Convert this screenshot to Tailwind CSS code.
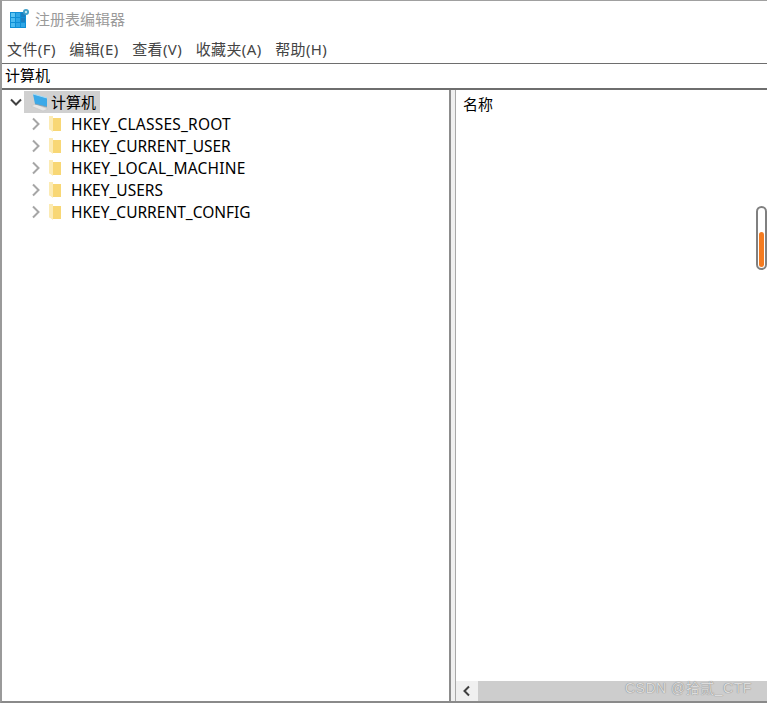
<!DOCTYPE html>
<html lang="zh-CN">
<head>
    <meta charset="UTF-8">
    <title>注册表编辑器</title>
    <script src="https://cdn.jsdelivr.net/npm/@tailwindcss/browser@4"></script>
</head>
<body class="bg-white overflow-hidden">
    <div class="relative w-[767px] h-[703px] flex flex-col border-t border-t-[#a0a0a0] border-l-2 border-l-[#9a9a9a] border-b-2 border-b-[#8a8a8a] text-[15px] text-black font-['Noto_Sans','Noto_Sans_CJK_SC',sans-serif]">
        <!-- title -->
        <div class="h-[37px] flex items-center pl-[8px] pb-[1px] gap-[5px] shrink-0">
            <svg width="20" height="20" viewBox="0 0 20 20">
                <rect x="0" y="3" width="16" height="16" fill="#0f8fd6"/>
                <rect x="1" y="4" width="4" height="4" fill="#5cc4f2"/>
                <rect x="6" y="4" width="4" height="4" fill="#2fa6e6"/>
                <rect x="11" y="4" width="4" height="4" fill="#1c7fc0"/>
                <rect x="1" y="9" width="4" height="4" fill="#4dbcf0"/>
                <rect x="6" y="9" width="4" height="4" fill="#2fa6e6"/>
                <rect x="11" y="9" width="4" height="4" fill="#1c7fc0"/>
                <rect x="1" y="14" width="4" height="4" fill="#4dbcf0"/>
                <rect x="6" y="14" width="4" height="4" fill="#2fa6e6"/>
                <rect x="11" y="14" width="4" height="4" fill="#2fa6e6"/>
                <circle cx="16" cy="3" r="3" fill="#3f9fc8"/>
                <circle cx="16" cy="3" r="1.2" fill="#bfe6f5"/>
            </svg>
            <span class="text-[15px] text-[#9a9a9a]">注册表编辑器</span>
        </div>
        <!-- menu -->
        <div class="h-[25px] flex items-center pl-[5px] pb-[2px] gap-[13.5px] text-[15px] tracking-[0.4px] text-[#444] shrink-0">
            <span>文件(F)</span>
            <span>编辑(E)</span>
            <span>查看(V)</span>
            <span>收藏夹(A)</span>
            <span>帮助(H)</span>
        </div>
        <!-- address bar -->
        <div class="h-[27px] flex items-center pl-[3px] pb-[2px] border-t border-t-[#6e6e6e] border-b-2 border-b-[#6e6e6e] shrink-0">计算机</div>
        <!-- panes -->
        <div class="flex-1 flex min-h-0">
            <!-- tree -->
            <div class="w-[447px] pt-[1px] shrink-0">
                <div class="h-[22px] flex items-center">
                    <svg class="ml-[8px]" width="12" height="12" viewBox="0 0 12 12"><path d="M1 3.5 L6 8.5 L11 3.5" fill="none" stroke="#404040" stroke-width="2"/></svg>
                    <div class="ml-[2px] h-[22px] w-[76px] bg-[#d0d0d0] flex items-center pl-[6px] gap-[1px]">
                        <svg width="20" height="20" viewBox="0 0 20 20">
                            <path d="M1 14 L13 19 L18 17 L6 12 Z" fill="#e6e6e6" stroke="#c4c4c4" stroke-width="0.6"/>
                            <path d="M3 2 L17 6 L17 15 L5 12 Z" fill="#3ca9e8"/>
                            <path d="M3 2 L17 6" stroke="#a6dcf6" stroke-width="1"/>
                            <path d="M5 12 L17 15" stroke="#8a9aa6" stroke-width="0.8"/>
                        </svg>
                        <span>计算机</span>
                    </div>
                </div>
                <div class="h-[22px] flex items-center">
                    <svg class="ml-[29px]" width="10" height="14" viewBox="0 0 10 14"><path d="M2 1.5 L7.5 7 L2 12.5" fill="none" stroke="#a6a6a6" stroke-width="2"/></svg>
                    <svg class="ml-[7px]" width="14" height="18" viewBox="0 0 14 18"><path d="M1 1 L5 1 L5 3 L13 3 L13 16 L5 16 L1 14 Z" fill="#f8d775"/><path d="M1 1 L5 1 L5 17 L1 14 Z" fill="#fcebb4"/></svg>
                    <span class="ml-[9px] mt-[2px] text-[15.5px] tracking-[0.22px]">HKEY_CLASSES_ROOT</span>
                </div>
                <div class="h-[22px] flex items-center">
                    <svg class="ml-[29px]" width="10" height="14" viewBox="0 0 10 14"><path d="M2 1.5 L7.5 7 L2 12.5" fill="none" stroke="#a6a6a6" stroke-width="2"/></svg>
                    <svg class="ml-[7px]" width="14" height="18" viewBox="0 0 14 18"><path d="M1 1 L5 1 L5 3 L13 3 L13 16 L5 16 L1 14 Z" fill="#f8d775"/><path d="M1 1 L5 1 L5 17 L1 14 Z" fill="#fcebb4"/></svg>
                    <span class="ml-[9px] mt-[2px] text-[15.5px]">HKEY_CURRENT_USER</span>
                </div>
                <div class="h-[22px] flex items-center">
                    <svg class="ml-[29px]" width="10" height="14" viewBox="0 0 10 14"><path d="M2 1.5 L7.5 7 L2 12.5" fill="none" stroke="#a6a6a6" stroke-width="2"/></svg>
                    <svg class="ml-[7px]" width="14" height="18" viewBox="0 0 14 18"><path d="M1 1 L5 1 L5 3 L13 3 L13 16 L5 16 L1 14 Z" fill="#f8d775"/><path d="M1 1 L5 1 L5 17 L1 14 Z" fill="#fcebb4"/></svg>
                    <span class="ml-[9px] mt-[2px] text-[15.5px] tracking-[0.22px]">HKEY_LOCAL_MACHINE</span>
                </div>
                <div class="h-[22px] flex items-center">
                    <svg class="ml-[29px]" width="10" height="14" viewBox="0 0 10 14"><path d="M2 1.5 L7.5 7 L2 12.5" fill="none" stroke="#a6a6a6" stroke-width="2"/></svg>
                    <svg class="ml-[7px]" width="14" height="18" viewBox="0 0 14 18"><path d="M1 1 L5 1 L5 3 L13 3 L13 16 L5 16 L1 14 Z" fill="#f8d775"/><path d="M1 1 L5 1 L5 17 L1 14 Z" fill="#fcebb4"/></svg>
                    <span class="ml-[9px] mt-[2px] text-[15.5px]">HKEY_USERS</span>
                </div>
                <div class="h-[22px] flex items-center">
                    <svg class="ml-[29px]" width="10" height="14" viewBox="0 0 10 14"><path d="M2 1.5 L7.5 7 L2 12.5" fill="none" stroke="#a6a6a6" stroke-width="2"/></svg>
                    <svg class="ml-[7px]" width="14" height="18" viewBox="0 0 14 18"><path d="M1 1 L5 1 L5 3 L13 3 L13 16 L5 16 L1 14 Z" fill="#f8d775"/><path d="M1 1 L5 1 L5 17 L1 14 Z" fill="#fcebb4"/></svg>
                    <span class="ml-[9px] mt-[2px] text-[15.5px]">HKEY_CURRENT_CONFIG</span>
                </div>
            </div>
            <!-- splitter -->
            <div class="w-[7px] shrink-0 bg-[#f0f0f0] border-l-2 border-r border-l-[#8c8c8c] border-r-[#a8a8a8]"></div>
            <!-- list -->
            <div class="flex-1 flex flex-col min-w-0">
                <div class="flex-1 pl-[7px] pt-[3px]">名称</div>
                <div class="h-[20px] flex shrink-0 bg-[#cdcdcd]">
                    <div class="w-[22px] bg-[#f0f0f0] flex items-center justify-center">
                        <svg width="10" height="12" viewBox="0 0 10 12"><path d="M7 1.5 L2.5 6 L7 10.5" fill="none" stroke="#404040" stroke-width="2"/></svg>
                    </div>
                </div>
            </div>
        </div>
        <!-- floating scroll indicator -->
        <div class="absolute left-[754px] top-[205px] w-[11px] h-[64px] rounded-full border-2 border-[#808080] bg-white flex flex-col justify-end items-center pb-[1px]">
            <div class="w-[5px] h-[35px] rounded-full bg-[#f47b20]"></div>
        </div>
        <!-- watermark -->
        <div class="absolute left-[623px] top-[677px] text-[14px] text-[#dcdcdc] tracking-[0.5px] font-['Liberation_Sans','Noto_Sans_CJK_SC',sans-serif] [text-shadow:0_0_1px_#666]">CSDN @拾贰_CTF</div>
    </div>
</body>
</html>
